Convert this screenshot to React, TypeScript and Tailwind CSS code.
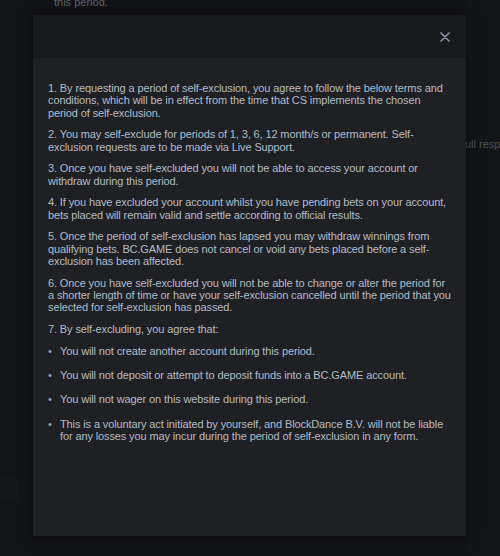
import React from 'react';

const paragraphs = [
  '1. By requesting a period of self-exclusion, you agree to follow the below terms and conditions, which will be in effect from the time that CS implements the chosen period of self-exclusion.',
  '2. You may self-exclude for periods of 1, 3, 6, 12 month/s or permanent. Self-exclusion requests are to be made via Live Support.',
  '3. Once you have self-excluded you will not be able to access your account or withdraw during this period.',
  '4. If you have excluded your account whilst you have pending bets on your account, bets placed will remain valid and settle according to official results.',
  '5. Once the period of self-exclusion has lapsed you may withdraw winnings from qualifying bets. BC.GAME does not cancel or void any bets placed before a self-exclusion has been affected.',
  '6. Once you have self-excluded you will not be able to change or alter the period for a shorter length of time or have your self-exclusion cancelled until the period that you selected for self-exclusion has passed.',
  '7. By self-excluding, you agree that:',
];

const bullets = [
  'You will not create another account during this period.',
  'You will not deposit or attempt to deposit funds into a BC.GAME account.',
  'You will not wager on this website during this period.',
  'This is a voluntary act initiated by yourself, and BlockDance B.V. will not be liable for any losses you may incur during the period of self-exclusion in any form.',
];

export default function App() {
  return (
    <div
      className="relative h-[556px] w-[500px] overflow-hidden bg-[#131418]"
      style={{ fontFamily: '"Liberation Sans", Arial, sans-serif' }}
    >
      {/* page behind the overlay */}
      <div className="ml-[32px] h-full w-[434px] bg-[#111215]">
        <p className="-mt-[2px] pl-[22px] text-[11px] leading-[8px] text-[#5d636c]">this period.</p>
      </div>
      <p className="absolute left-[465px] top-[136px] whitespace-nowrap text-[11px] text-[#4a4f57]">ull resp</p>
      <div className="absolute left-0 top-[476px] h-[26px] w-[17px] bg-[#15161a]" />

      {/* modal */}
      <div className="absolute left-[33px] top-[15px] flex h-[521px] w-[433px] flex-col bg-[#1f2024] shadow-[0_0_12px_rgba(0,0,0,0.4)]">
        <div className="flex h-[43px] shrink-0 items-center justify-end bg-[#18191d] pr-[16px]">
          <svg width="10" height="10" viewBox="0 0 10 10" fill="none" stroke="#8a919c" strokeWidth="1.7" strokeLinecap="round">
            <path d="M1 1L9 9M9 1L1 9" />
          </svg>
        </div>
        <div className="flex flex-col gap-[9.3px] px-[15px] pt-[24px] text-[11px] leading-[12.35px] tracking-[-0.12px] text-[#b4bcc6]">
          {paragraphs.map((p) => (
            <p key={p}>{p}</p>
          ))}
          <ul className="flex flex-col gap-[12px]">
            {bullets.map((b) => (
              <li key={b} className="flex">
                <span className="w-[12px] shrink-0 text-[#9aa2ad]">•</span>
                <span>{b}</span>
              </li>
            ))}
          </ul>
        </div>
      </div>
    </div>
  );
}
